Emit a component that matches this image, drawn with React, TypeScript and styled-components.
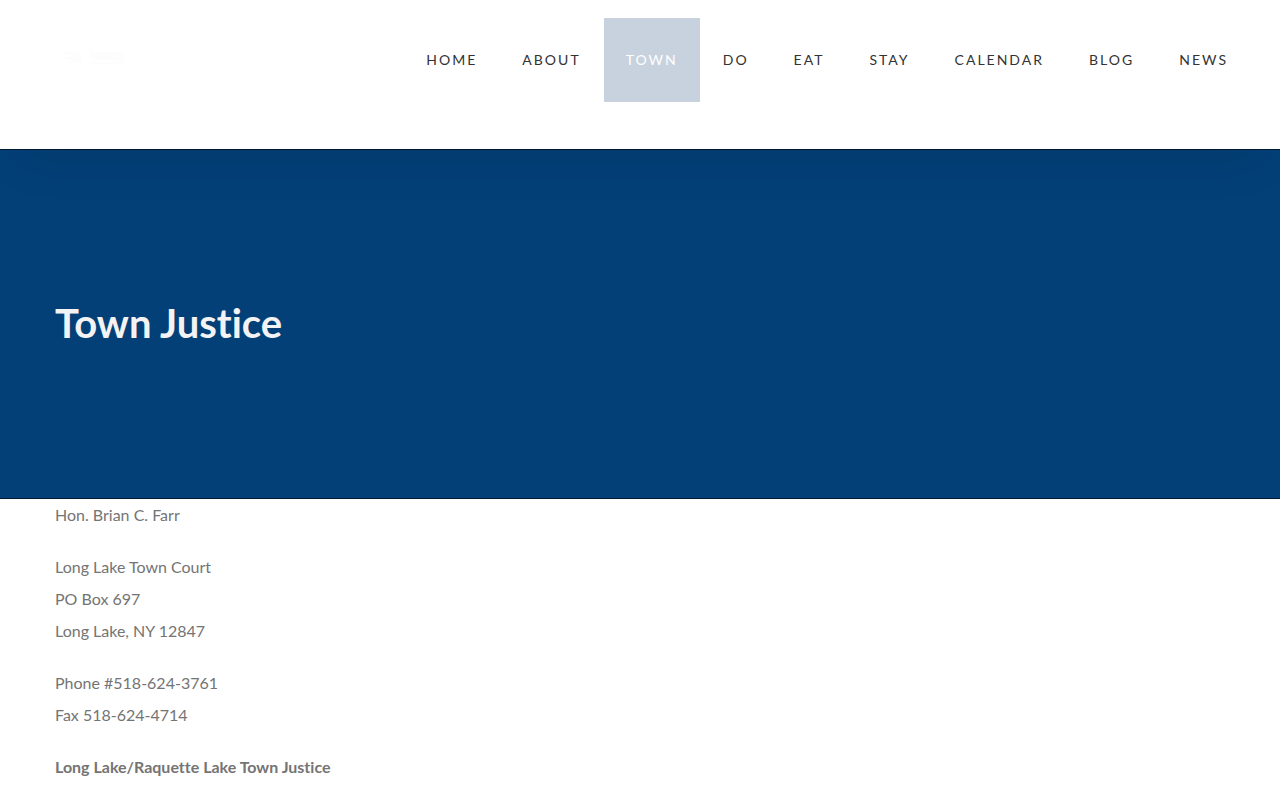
import React from 'react';
import styled, { createGlobalStyle } from 'styled-components';

const GlobalStyle = createGlobalStyle`
  * { box-sizing: border-box; }
  body {
    margin: 0;
    background: #fff;
    color: #747474;
    font-family: Lato, sans-serif;
    font-size: 16px;
    font-variant-ligatures: none;
    line-height: 32px;
  }
`;

const Header = styled.header`
  position: relative;
  z-index: 1;
  display: flex;
  justify-content: space-between;
  align-items: flex-start;
  padding: 18px 30px 47px 55px;
  background: #fff;
  box-shadow: 0 26px 50px -20px rgba(0, 0, 0, 0.12);
`;

const LogoLink = styled.a`
  display: block;
  padding-top: 27px;

  svg { display: block; }
`;

const NavList = styled.ul`
  display: flex;
  gap: 1px;
  margin: 0;
  padding: 0;
  list-style: none;
`;

const NavLink = styled.a<{ $active?: boolean }>`
  display: block;
  padding: 0 22px;
  background: ${({ $active }) => ($active ? '#c8d1de' : 'transparent')};
  color: ${({ $active }) => ($active ? '#fff' : '#333')};
  font-size: 14px;
  line-height: 84px;
  letter-spacing: 2px;
  text-decoration: none;
  text-transform: uppercase;
`;

const Hero = styled.section`
  display: flex;
  align-items: center;
  min-height: 350px;
  padding: 0 55px 2px;
  background: #034078;
  border: solid #021c36;
  border-width: 1px 0;
`;

const Title = styled.h1`
  margin: 0;
  color: #f3f3f3;
  font-size: 40px;
  font-weight: 700;
  line-height: 48px;
`;

const Content = styled.main`
  padding: 0 55px;
`;

const Paragraph = styled.p`
  margin: 0 0 20px;
`;

const navItems = ['Home', 'About', 'Town', 'Do', 'Eat', 'Stay', 'Calendar', 'Blog', 'News'];

const paragraphs = [
  ['Hon. Brian C. Farr'],
  ['Long Lake Town Court', 'PO Box 697', 'Long Lake, NY 12847'],
  ['Phone #518-624-3761', 'Fax 518-624-4714'],
];

export default function App() {
  return (
    <>
      <GlobalStyle />
      <Header>
        <LogoLink href="#" aria-label="Long Lake home">
          <svg width="80" height="24" viewBox="0 0 80 24" fill="#fdfdfd" aria-hidden="true">
            <path d="M9 7h14v2h4v8H15v-3H9v-2h10v-2H9z" />
            <path d="M34 4h4v3h31v12H36v-2h26v-2H38l-4-4z" />
          </svg>
        </LogoLink>
        <nav aria-label="Main">
          <NavList>
            {navItems.map((item) => (
              <li key={item}>
                <NavLink href="#" $active={item === 'Town'} aria-current={item === 'Town' ? 'page' : undefined}>
                  {item}
                </NavLink>
              </li>
            ))}
          </NavList>
        </nav>
      </Header>
      <Hero>
        <Title>Town Justice</Title>
      </Hero>
      <Content>
        {paragraphs.map((lines) => (
          <Paragraph key={lines[0]}>
            {lines.map((line, i) => (
              <React.Fragment key={line}>
                {i > 0 && <br />}
                {line}
              </React.Fragment>
            ))}
          </Paragraph>
        ))}
        <Paragraph>
          <strong>Long Lake/Raquette Lake Town Justice</strong>
        </Paragraph>
      </Content>
    </>
  );
}
